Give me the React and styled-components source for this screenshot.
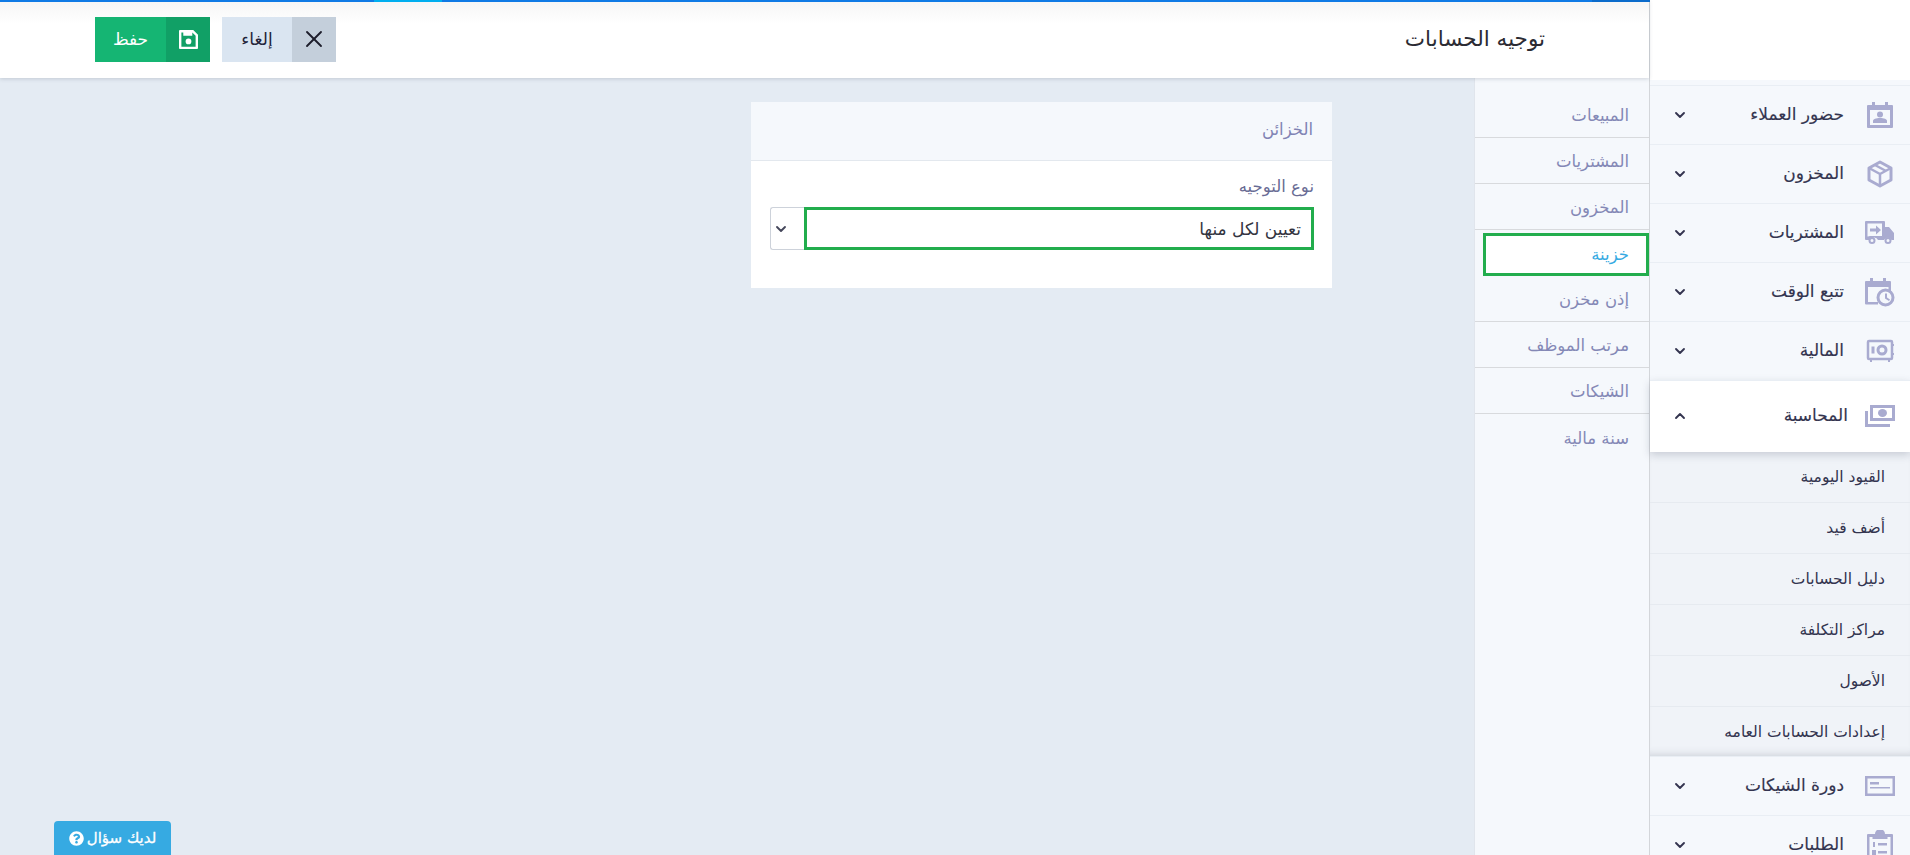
import styled, { createGlobalStyle } from "styled-components";
import { X, ChevronDown, ChevronUp } from "lucide-react";
import { FaQuestionCircle } from "react-icons/fa";

const FONT = `"DejaVu Sans", "Noto Sans", sans-serif`;

const Calendar = () => (
  <svg width="26" height="28" viewBox="0 0 26 28" fill="#a9abd0">
    <path d="M1 4h4V1h3v3h10V1h3v3h4a1 1 0 0 1 1 1v21a1 1 0 0 1-1 1H1a1 1 0 0 1-1-1V5a1 1 0 0 1 1-1z" />
    <rect x="3" y="9" width="20" height="15" fill="#f5f8fc" />
    <circle cx="13" cy="13.5" r="3" />
    <path d="M6 22v-2c0-2 3-3 7-3s7 1 7 3v2z" />
  </svg>
);

const Box = () => (
  <svg width="26" height="28" viewBox="0 0 26 28" fill="none" stroke="#a9abd0" strokeWidth="3" strokeLinejoin="round">
    <path d="M13 2l11 6v12l-11 6-11-6V8z" />
    <path d="M2 8l11 6 11-6M13 14v12M8 5l11 6" strokeWidth="2.5" />
  </svg>
);

const Truck = () => (
  <svg width="30" height="24" viewBox="0 0 30 24" fill="#a9abd0">
    <path d="M1 0h18a1 1 0 0 1 1 1v5h4l5 6v7h-2.500a4 4 0 0 0-7.500 0h-6a4 4 0 0 0-7.500 0H1a1 1 0 0 1-1-1V1a1 1 0 0 1 1-1zM2.500 2.500v13H3a4 4 0 0 1 2-.5h12V2.500z" />
    <path d="M5 7.500h6V4.500l5 4.500-5 4.500v-3H5z" />
    <circle cx="7" cy="19.500" r="2.500" fill="#f5f8fc" stroke="#a9abd0" strokeWidth="2" />
    <circle cx="23" cy="19.500" r="2.500" fill="#f5f8fc" stroke="#a9abd0" strokeWidth="2" />
  </svg>
);

const CalendarClock = () => (
  <svg width="30" height="30" viewBox="0 0 30 30" fill="#a9abd0">
    <path d="M1 4h4V1h3v3h10V1h3v3h4a1 1 0 0 1 1 1v10h-2.500v-5h-20.500v15h10v2.500H1a1 1 0 0 1-1-1V5a1 1 0 0 1 1-1z" />
    <circle cx="20.500" cy="20.500" r="7.500" fill="#f5f8fc" stroke="#a9abd0" strokeWidth="3" />
    <path d="M20 16.500h2v4l3 2-1 1.500-4-2.500z" />
  </svg>
);

const Safe = () => (
  <svg width="28" height="24" viewBox="0 0 28 24" fill="none" stroke="#a9abd0" strokeWidth="2.500">
    <rect x="2" y="2" width="24" height="18" rx="1" />
    <circle cx="16" cy="11" r="4" strokeWidth="3" />
    <path d="M7 7.500v7" strokeWidth="3" />
    <path d="M5 20v3M23 20v3M26 6h2M26 15h2" strokeWidth="2" />
  </svg>
);

const Cash = () => (
  <svg width="30" height="22" viewBox="0 0 30 22" fill="#a9abd0">
    <path d="M5 0h25v16H5zM8 3v10h19V3z" fillRule="evenodd" />
    <ellipse cx="17.500" cy="8" rx="4.500" ry="4" />
    <path d="M0 6h3v13h22v3H0z" />
  </svg>
);

const Cheque = () => (
  <svg width="30" height="20" viewBox="0 0 30 20" fill="#a9abd0">
    <path d="M0 0h30v20H0zM2.500 2.500v15h25v-15z" fillRule="evenodd" />
    <rect x="5" y="6" width="9" height="2.500" />
    <rect x="5" y="11" width="20" height="1.500" />
  </svg>
);

const Clipboard = () => (
  <svg width="26" height="30" viewBox="0 0 26 30" fill="#a9abd0">
    <path d="M1 4h7a5 5 0 0 1 10 0h7a1 1 0 0 1 1 1v24a1 1 0 0 1-1 1H1a1 1 0 0 1-1-1V5a1 1 0 0 1 1-1zM2.500 7v20.500h21V7h-3v2h-15V7z" fillRule="evenodd" />
    <rect x="6" y="12" width="2" height="5" />
    <rect x="11" y="13" width="9" height="2.500" />
    <rect x="5" y="20" width="4" height="5" />
    <rect x="11" y="21" width="9" height="2.500" />
  </svg>
);

const SaveIcon = () => (
  <svg width="19" height="19" viewBox="0 0 20 20" fill="#fff">
    <path d="M1 0h14l5 5v14a1 1 0 0 1-1 1H1a1 1 0 0 1-1-1V1a1 1 0 0 1 1-1zM2.500 2.500v15h15V6l-3.500-3.500v3.500H4.500V2.500z" fillRule="evenodd" />
    <circle cx="10" cy="12" r="3" />
  </svg>
);

const menuTop = [
  { label: "حضور العملاء", icon: <Calendar /> },
  { label: "المخزون", icon: <Box /> },
  { label: "المشتريات", icon: <Truck /> },
  { label: "تتبع الوقت", icon: <CalendarClock /> },
  { label: "المالية", icon: <Safe /> },
];

const subItems = [
  "القيود اليومية",
  "أضف قيد",
  "دليل الحسابات",
  "مراكز التكلفة",
  "الأصول",
  "إعدادات الحسابات العامه",
];

const menuBottom = [
  { label: "دورة الشيكات", icon: <Cheque /> },
  { label: "الطلبات", icon: <Clipboard /> },
];

const tabs = ["المبيعات", "المشتريات", "المخزون", "خزينة", "إذن مخزن", "مرتب الموظف", "الشيكات", "سنة مالية"];

function App() {
  return (
    <>
      <GlobalStyle />
      <Page dir="rtl">
        <Loader />
        <Sidebar>
          <LogoArea />
          <MenuList>
            {menuTop.map((item) => (
              <MenuRow key={item.label}>
                <IconSlot>{item.icon}</IconSlot>
                <MenuLabel>{item.label}</MenuLabel>
                <ChevronDown size={16} strokeWidth={2.8} color="#33344f" />
              </MenuRow>
            ))}
            <ActiveRow>
              <IconSlot><Cash /></IconSlot>
              <ActiveLabel>المحاسبة</ActiveLabel>
              <ChevronUp size={16} strokeWidth={2.8} color="#33344f" />
            </ActiveRow>
            <SubMenu>
              {subItems.map((item) => (
                <SubItem key={item}>{item}</SubItem>
              ))}
            </SubMenu>
            {menuBottom.map((item) => (
              <MenuRow key={item.label}>
                <IconSlot>{item.icon}</IconSlot>
                <MenuLabel>{item.label}</MenuLabel>
                <ChevronDown size={16} strokeWidth={2.8} color="#33344f" />
              </MenuRow>
            ))}
          </MenuList>
        </Sidebar>
        <Main>
          <Header>
            <Title>توجيه الحسابات</Title>
            <Actions>
              <ActionBtn $bg="#dae5f1" $color="#23233a">
                <BtnIcon $bg="#c4cfdb"><X size={28} strokeWidth={1.6} color="#1d1d2b" /></BtnIcon>
                <BtnText $w="70px">إلغاء</BtnText>
              </ActionBtn>
              <ActionBtn $bg="#15b573" $color="#fff">
                <BtnIcon $bg="#11a066"><SaveIcon /></BtnIcon>
                <BtnText $w="71px">حفظ</BtnText>
              </ActionBtn>
            </Actions>
          </Header>
          <Body>
            <Tabs>
              {tabs.map((tab) => (
                <Tab key={tab} $active={tab === "خزينة"}>{tab}</Tab>
              ))}
            </Tabs>
            <Content>
              <Card>
                <CardHead>الخزائن</CardHead>
                <CardBody>
                  <FieldLabel>نوع التوجيه</FieldLabel>
                  <SelectWrap>
                    <SelectValue>تعيين لكل منها</SelectValue>
                    <SelectArrow><ChevronDown size={16} strokeWidth={2.8} color="#44465a" /></SelectArrow>
                  </SelectWrap>
                </CardBody>
              </Card>
            </Content>
          </Body>
        </Main>
        <HelpBtn>
          لديك سؤال
          <FaQuestionCircle size={15} color="#fff" />
        </HelpBtn>
      </Page>
    </>
  );
}

const GlobalStyle = createGlobalStyle`
  html, body {
    margin: 0;
    padding: 0;
    height: 100%;
    overflow: hidden;
  }
  body {
    font-family: ${FONT};
    background: #e4ebf3;
  }
`;

const Page = styled.div`
  position: relative;
  display: flex;
  width: 1910px;
  height: 855px;
  overflow: hidden;
  background: #e4ebf3;
`;

const Loader = styled.div`
  position: absolute;
  top: 0;
  left: 0;
  width: 1650px;
  height: 2px;
  z-index: 5;
  background: linear-gradient(
    to right,
    #0f7ae5 374px,
    #00aeef 374px,
    #00aeef 442px,
    #0f7ae5 442px,
    #0f7ae5 1592px,
    #0b6bcb 1592px
  );
`;

const Sidebar = styled.aside`
  width: 260px;
  flex-shrink: 0;
  background: #f5f8fc;
  border-left: 1px solid #d3d6da;
  box-sizing: content-box;
`;

const LogoArea = styled.div`
  height: 80px;
  background: #fff;
`;

const MenuList = styled.div`
  padding-top: 5px;
`;

const MenuRow = styled.div`
  display: flex;
  align-items: center;
  height: 57px;
  padding: 0 15px 1px 22px;
  border-top: 1px solid #e9eef4;
  color: #33344f;
`;

const IconSlot = styled.span`
  display: flex;
  justify-content: center;
  align-items: center;
  width: 30px;
  flex-shrink: 0;
`;

const MenuLabel = styled.span`
  flex: 1;
  margin: 0 21px 2px 0;
  font-size: 17px;
  font-weight: 500;
  -webkit-text-stroke: 0.15px #33344f;
`;

const ActiveRow = styled(MenuRow)`
  position: relative;
  height: 70px;
  background: #fff;
  box-shadow: 0 3px 8px rgba(60, 70, 90, 0.22);
  z-index: 1;
`;

const ActiveLabel = styled(MenuLabel)`
  margin-right: 17px;
`;

const SubMenu = styled.div`
  background: #f0f3f8;
  box-shadow: inset 0 -8px 10px -8px rgba(60, 70, 90, 0.25);
`;

const SubItem = styled.div`
  display: flex;
  align-items: center;
  height: 50px;
  padding-right: 25px;
  border-bottom: 1px solid #e6eaf0;
  font-size: 15.5px;
  color: #33344f;
  &:last-child {
    height: 49px;
    border-bottom: 0;
  }
`;

const Main = styled.main`
  flex: 1;
  min-width: 0;
  display: flex;
  flex-direction: column;
`;

const Header = styled.header`
  position: relative;
  z-index: 2;
  display: flex;
  align-items: center;
  justify-content: space-between;
  height: 78px;
  padding: 0 104px 0 79px;
  box-sizing: border-box;
  background: linear-gradient(to bottom, #f5f5f5, #fff 24px);
  box-shadow: 0 1px 4px rgba(60, 70, 90, 0.2);
`;

const Title = styled.h1`
  margin: 0 0 2px;
  font-size: 21.5px;
  font-weight: 500;
  color: #2b2b33;
`;

const Actions = styled.div`
  display: flex;
  gap: 12px;
  margin-left: 16px;
`;

const ActionBtn = styled.button`
  display: flex;
  align-items: stretch;
  height: 45px;
  padding: 0;
  border: 0;
  font-family: ${FONT};
  font-weight: 500;
  background: ${(p) => p.$bg};
  color: ${(p) => p.$color};
`;

const BtnIcon = styled.span`
  display: flex;
  align-items: center;
  justify-content: center;
  width: 44px;
  background: ${(p) => p.$bg};
`;

const BtnText = styled.span`
  display: flex;
  align-items: center;
  justify-content: center;
  width: ${(p) => p.$w};
  font-size: 17px;
`;

const Body = styled.div`
  flex: 1;
  display: flex;
  min-height: 0;
`;

const Tabs = styled.nav`
  width: 175px;
  flex-shrink: 0;
  padding-top: 14px;
  background: #f5f8fc;
  border-left: 1px solid #e0e5ec;
  box-sizing: border-box;
`;

const Tab = styled.div`
  display: flex;
  align-items: center;
  height: 46px;
  box-sizing: border-box;
  padding: 2px 20px 0 0;
  border-bottom: 1px solid #d8dadd;
  font-size: 16.5px;
  color: #8488b6;
  &:last-child {
    border-bottom: 0;
  }
  ${(p) =>
    p.$active &&
    `
    margin-left: 8px;
    margin-top: 3px;
    height: 43px;
    padding: 0 17px 0 0;
    background: #fff;
    color: #36aae2;
    border: 3px solid #22ad4d;
  `}
`;

const Content = styled.div`
  flex: 1;
  padding: 24px 142px 0 0;
`;

const Card = styled.section`
  width: 581px;
  background: #fff;
`;

const CardHead = styled.div`
  display: flex;
  align-items: center;
  height: 59px;
  padding: 0 19px 3px 0;
  box-sizing: border-box;
  border-bottom: 1px solid #e3e8ee;
  background: #f5f8fc;
  font-size: 16.5px;
  font-weight: 500;
  color: #8083b4;
`;

const CardBody = styled.div`
  padding: 13px 18px 38px 18px;
`;

const FieldLabel = styled.div`
  font-size: 16.5px;
  line-height: 25px;
  color: #686b94;
  margin-bottom: 8px;
`;

const SelectWrap = styled.div`
  display: flex;
  align-items: stretch;
  height: 43px;
  width: 544px;
`;

const SelectValue = styled.div`
  flex: 1;
  display: flex;
  align-items: center;
  padding-right: 10px;
  border: 3px solid #22ad4d;
  box-sizing: border-box;
  font-size: 17px;
  color: #33343f;
  background: #fff;
`;

const SelectArrow = styled.div`
  display: flex;
  align-items: center;
  justify-content: flex-end;
  width: 34px;
  padding-left: 2px;
  box-sizing: border-box;
  border: 1px solid #cdd2da;
  border-right: 0;
  border-radius: 3px 0 0 3px;
  background: #fff;
`;

const HelpBtn = styled.button`
  position: absolute;
  bottom: 0;
  left: 54px;
  display: flex;
  align-items: center;
  justify-content: center;
  gap: 3px;
  width: 117px;
  height: 34px;
  padding: 0;
  border: 0;
  border-radius: 4px 4px 0 0;
  background: #36aae2;
  color: #fff;
  font-family: ${FONT};
  font-size: 15px;
  font-weight: 400;
  -webkit-text-stroke: 0.3px #fff;
`;

export default App;
